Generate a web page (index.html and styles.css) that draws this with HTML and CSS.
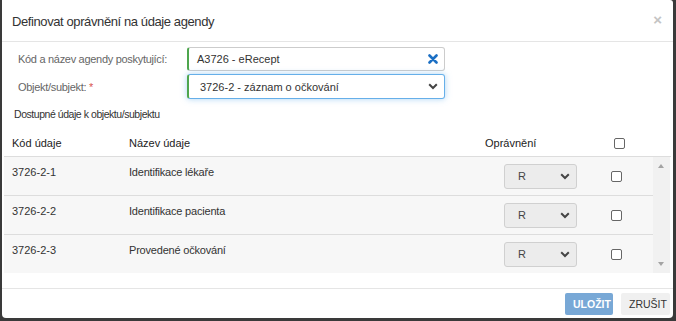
FILE: index.html
```html
<!DOCTYPE html>
<html>

<head>
  <meta charset="UTF-8">
  <title>Definovat oprávnění</title>
  <link rel="stylesheet" href="styles.css">
</head>

<body>

  <div class="modal">

    <div class="modal-header">
      <h4 class="modal-title">Definovat oprávnění na údaje agendy</h4>
      <span class="close">&times;</span>
    </div>

    <div class="modal-body">

      <div class="form-row">
        <label class="form-label">Kód a název agendy poskytující:</label>
        <div class="form-input">
          <span>A3726 - eRecept</span>
          <svg class="clear-icon" width="10" height="10" viewBox="0 0 10 10">
            <path d="M1.5 1.5 L8.5 8.5 M8.5 1.5 L1.5 8.5" stroke="#1b6fc4" stroke-width="2.6" stroke-linecap="round" />
          </svg>
        </div>
      </div>

      <div class="form-row">
        <label class="form-label">Objekt/subjekt: <span class="required">*</span></label>
        <div class="form-input focused">
          <span class="select-text">3726-2 - záznam o očkování</span>
          <svg class="chevron" width="10" height="7" viewBox="0 0 10 7">
            <path d="M1.2 1.3 L5 5 L8.8 1.3" fill="none" stroke="#444" stroke-width="2" />
          </svg>
        </div>
      </div>

      <div class="section-title">Dostupné údaje k objektu/subjektu</div>

      <div class="grid">
        <div class="grid-head">
          <div class="col-code">Kód údaje</div>
          <div class="col-name">Název údaje</div>
          <div class="col-perm">Oprávnění</div>
          <div class="col-check"><span class="checkbox"></span></div>
        </div>

        <div class="grid-scroll">
          <div class="grid-rows">
            <div class="grid-row">
              <div class="col-code">3726-2-1</div>
              <div class="col-name">Identifikace lékaře</div>
              <div class="col-perm">
                <div class="mini-select">R
                  <svg class="chevron" width="10" height="7" viewBox="0 0 10 7">
                    <path d="M1.2 1.3 L5 5 L8.8 1.3" fill="none" stroke="#444" stroke-width="2" />
                  </svg>
                </div>
              </div>
              <div class="col-check"><span class="checkbox"></span></div>
            </div>
            <div class="grid-row">
              <div class="col-code">3726-2-2</div>
              <div class="col-name">Identifikace pacienta</div>
              <div class="col-perm">
                <div class="mini-select">R
                  <svg class="chevron" width="10" height="7" viewBox="0 0 10 7">
                    <path d="M1.2 1.3 L5 5 L8.8 1.3" fill="none" stroke="#444" stroke-width="2" />
                  </svg>
                </div>
              </div>
              <div class="col-check"><span class="checkbox"></span></div>
            </div>
            <div class="grid-row">
              <div class="col-code">3726-2-3</div>
              <div class="col-name">Provedené očkování</div>
              <div class="col-perm">
                <div class="mini-select">R
                  <svg class="chevron" width="10" height="7" viewBox="0 0 10 7">
                    <path d="M1.2 1.3 L5 5 L8.8 1.3" fill="none" stroke="#444" stroke-width="2" />
                  </svg>
                </div>
              </div>
              <div class="col-check"><span class="checkbox"></span></div>
            </div>
          </div>
          <div class="scrollbar">
            <span class="arrow-up"></span>
            <span class="arrow-down"></span>
          </div>
        </div>
      </div>

    </div>

    <div class="modal-footer">
      <button class="btn btn-primary">Uložit</button>
      <button class="btn btn-default">Zrušit</button>
    </div>

  </div>

</body>

</html>
```

FILE: styles.css
```css
body {
  margin: 0;
  padding: 0 3px 3px 2px;
  height: 321px;
  box-sizing: border-box;
  background-color: #3a3a3a;
  font-family: 'Liberation Sans', Arial, sans-serif;
  color: #333;
  overflow: hidden;
}

.modal {
  height: 100%;
  background-color: #fff;
  border-radius: 0 3px 4px 4px;
  display: flex;
  flex-direction: column;
}

.modal-header {
  height: 42px;
  box-sizing: border-box;
  border-bottom: 1px solid #e5e5e5;
  display: flex;
  align-items: center;
  justify-content: space-between;
  padding: 2px 11px 0 10px;
}

.modal-title {
  margin: 0;
  font-size: 13px;
  letter-spacing: -0.4px;
  font-weight: normal;
  color: #333;
}

.close {
  color: #c4c4c4;
  font-size: 15px;
  font-weight: bold;
  margin-top: -5px;
}

.modal-body {
  flex: 1;
  padding: 5px 2px 0 2px;
}

.form-row {
  display: flex;
  align-items: center;
  margin-bottom: 3px;
}

.form-label {
  width: 169px;
  padding-left: 14px;
  font-size: 11px;
  letter-spacing: -0.3px;
  color: #666;
}

.required {
  color: #d9534f;
}

.form-input {
  width: 258px;
  height: 24px;
  box-sizing: border-box;
  border: 1px solid #ccc;
  border-left: 2px solid #4ea64e;
  border-radius: 3px;
  display: flex;
  align-items: center;
  justify-content: space-between;
  padding: 0 6px 0 8px;
  font-size: 11px;
  color: #333;
}

.form-input.focused {
  height: 25px;
  border-color: #66afe9;
  border-left-color: #4ea64e;
  box-shadow: 0 0 6px rgba(102, 175, 233, 0.55);
  padding-left: 11px;
}

.section-title {
  font-size: 10.5px;
  letter-spacing: -0.45px;
  color: #333;
  padding: 6px 0 0 10px;
  height: 22px;
}

.grid {
  font-size: 11px;
  color: #333;
}

.grid-head {
  display: flex;
  align-items: center;
  height: 26px;
  border-bottom: 1px solid #ddd;
  color: #222;
}

.grid-scroll {
  display: flex;
  width: 666px;
}

.grid-rows {
  flex: 1;
  background-color: #f7f7f7;
}

.grid-row {
  display: flex;
  align-items: center;
  height: 38px;
  border-bottom: 1px solid #ddd;
}

.grid-row:last-child {
  border-bottom: none;
}

.grid-row .col-code,
.grid-row .col-name {
  align-self: flex-start;
  padding-top: 9px;
}

.col-code {
  width: 117px;
  padding-left: 8px;
}

.col-name {
  width: 356px;
}

.grid-row .col-name {
  letter-spacing: -0.2px;
}

.col-perm {
  width: 92px;
  padding-left: 19px;
}

.grid-head .col-perm {
  padding-left: 0;
  width: 122px;
}

.col-check {
  display: flex;
  justify-content: center;
  width: 40px;
}

.grid-head .col-check {
  width: 25px;
}

.checkbox {
  display: block;
  width: 9px;
  height: 9px;
  border: 1px solid #666;
  border-radius: 2px;
  background-color: #fff;
}

.mini-select {
  width: 73px;
  height: 25px;
  box-sizing: border-box;
  background-color: #ececec;
  border: 1px solid #d0d0d0;
  border-radius: 3px;
  display: flex;
  align-items: center;
  justify-content: space-between;
  padding: 0 6px 0 13px;
  font-size: 11px;
  color: #444;
}

.scrollbar {
  width: 17px;
  background-color: #f1f1f1;
  position: relative;
}

.arrow-up,
.arrow-down {
  position: absolute;
  left: 5px;
  width: 0;
  height: 0;
  border-left: 3.5px solid transparent;
  border-right: 3.5px solid transparent;
}

.arrow-up {
  top: 7px;
  border-bottom: 4px solid #a3a3a3;
}

.arrow-down {
  bottom: 7px;
  border-top: 4px solid #a3a3a3;
}

.modal-footer {
  height: 30px;
  box-sizing: border-box;
  border-top: 1px solid #e5e5e5;
  display: flex;
  justify-content: flex-end;
  align-items: flex-start;
  gap: 8px;
  padding: 4px 3px 0 0;
}

.btn {
  height: 22px;
  border: none;
  border-radius: 2px;
  font-family: 'Liberation Sans', Arial, sans-serif;
  font-size: 10.5px;
  text-transform: uppercase;
  padding: 0 8px;
}

.btn-primary {
  width: 48px;
  background-color: #78a8d6;
  color: #fff;
  font-weight: bold;
}

.btn-default {
  width: 49px;
  background-color: #f0f0f0;
  color: #333;
}
```
